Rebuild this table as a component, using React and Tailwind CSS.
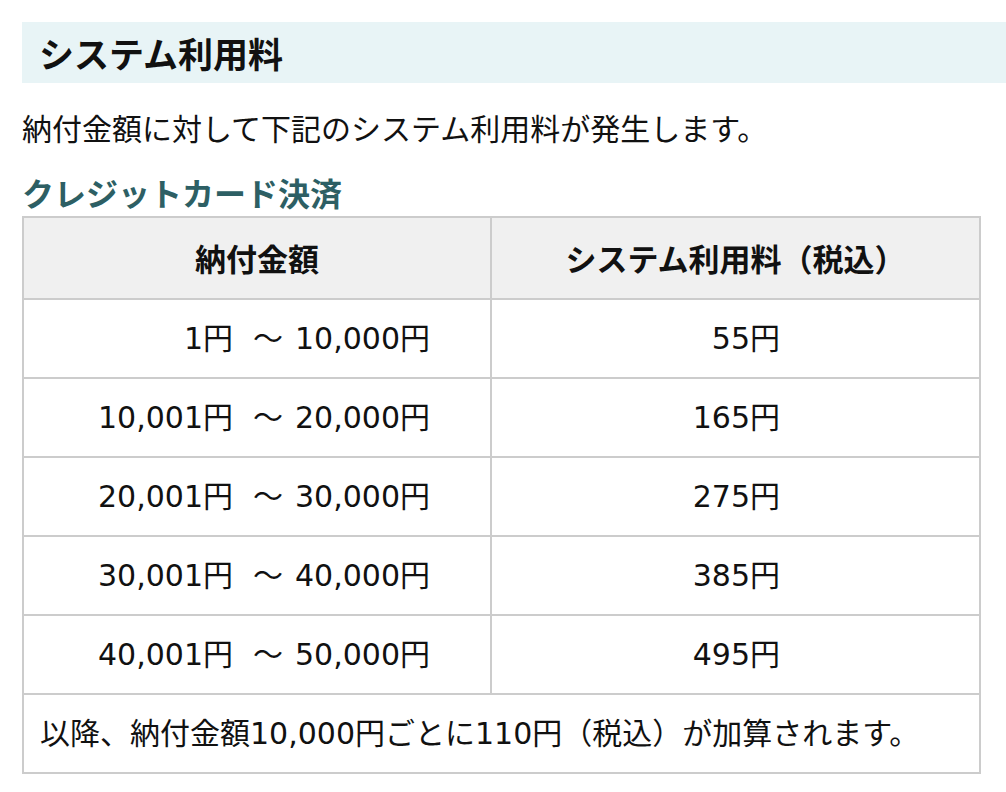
const rows = [
  ["1円", "10,000円", "55円"],
  ["10,001円", "20,000円", "165円"],
  ["20,001円", "30,000円", "275円"],
  ["30,001円", "40,000円", "385円"],
  ["40,001円", "50,000円", "495円"],
];

export default function App() {
  return (
    <div
      className="min-h-screen overflow-hidden bg-white pl-[22px] pt-[22px] text-[#111]"
      style={{ fontFamily: '"Noto Sans CJK JP", "Noto Sans", sans-serif' }}
    >
      <div className="w-[959px]">
        <h2 className="-mr-[40px] flex h-[61px] items-center bg-[#e8f4f6] pl-[17px] text-[35px] font-bold leading-none">
          システム利用料
        </h2>

        <p className="mt-[22px] text-[30px] leading-[44px]">
          納付金額に対して下記のシステム利用料が発生します。
        </p>

        <h3 className="mt-[19px] text-[32px] font-bold leading-[48px] text-[#2d5f64]">
          クレジットカード決済
        </h3>

        <table
          className="w-full border-collapse border-2 border-[#cccccc] text-[30px]"
          style={{ fontFamily: '"DejaVu Sans", "Noto Sans CJK JP", sans-serif' }}
        >
          <thead>
            <tr className="h-[82px] bg-[#f0f0f0]">
              <th
                className="w-[468px] border-2 border-[#cccccc] text-center text-[31px] font-bold"
                style={{ fontFamily: '"Noto Sans CJK JP", sans-serif' }}
              >
                納付金額
              </th>
              <th
                className="border-2 border-[#cccccc] text-center text-[31px] font-bold"
                style={{ fontFamily: '"Noto Sans CJK JP", sans-serif' }}
              >
                システム利用料（税込）
              </th>
            </tr>
          </thead>
          <tbody>
            {rows.map(([from, to, fee]) => (
              <tr key={from} className="h-[79px]">
                <td className="whitespace-nowrap border-2 border-[#cccccc] pr-[60px] text-right">
                  {from}
                  <span className="pl-[20px] pr-[12px]">～</span>
                  {to}
                </td>
                <td className="border-2 border-[#cccccc] pr-[199px] text-right">
                  {fee}
                </td>
              </tr>
            ))}
            <tr className="h-[79px]">
              <td colSpan={2} className="border-2 border-[#cccccc] pl-[16px] text-left">
                以降、納付金額10,000円ごとに110円（税込）が加算されます。
              </td>
            </tr>
          </tbody>
        </table>
      </div>
    </div>
  );
}
